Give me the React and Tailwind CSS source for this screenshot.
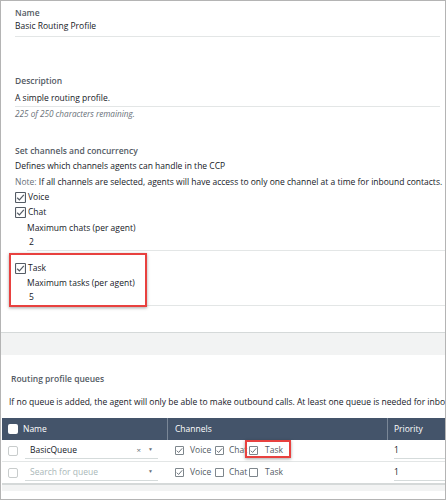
import React from "react";

const F = { fontFamily: "'Open Sans', Lato, Arial, sans-serif" };

function Check({ checked, size = 10, color = "#545b64" }) {
  return (
    <svg width={size} height={size} viewBox="0 0 10 10" className="shrink-0">
      <rect x="0.5" y="0.5" width="9" height="9" fill="white" stroke={color} strokeWidth="1" rx="0.5" />
      {checked && <path d="M2 5.2 L4 7.2 L8 2.6" fill="none" stroke={color} strokeWidth="1.1" />}
    </svg>
  );
}

function FormCheck({ label }) {
  return (
    <div className="flex items-center gap-[2px] h-[15px] text-[8.5px] text-[#16191f]">
      <Check checked size={11} color="#545b64" />
      <span>{label}</span>
    </div>
  );
}

function ChanCheck({ checked, label, w, gap }) {
  return (
    <div className={`flex items-center ${w}`}>
      <Check checked={checked} size={9} color="#687078" />
      <span className={`${gap} text-[8.5px] text-[#545b64]`}>{label}</span>
    </div>
  );
}

export default function App() {
  return (
    <div style={F} className="w-[446px] h-[500px] border border-[#b4b4b4] bg-white overflow-hidden flex flex-col">
      {/* top form */}
      <div className="h-[331px] pl-[14px] flex flex-col">
        <div className="pt-[5px] text-[8.5px] font-semibold text-[#545b64] h-[20px] leading-[14px]">Name</div>
        <div className="text-[8.5px] text-[#16191f] h-[10px] leading-[10px]">Basic Routing Profile</div>
        <div className="mt-[5px] w-[425px] border-b border-[#e3e6e6]"></div>
        <div className="mt-[38px] text-[8.5px] font-semibold text-[#545b64] leading-[12px]">Description</div>
        <div className="mt-[5px] text-[8.5px] text-[#16191f] leading-[12px]">A simple routing profile.</div>
        <div className="mt-[2px] w-[425px] border-b border-[#e3e6e6]"></div>
        <div className="mt-[1px] text-[8.2px] italic text-[#687078] leading-[12px]">225 of 250 characters remaining.</div>
        <div className="mt-[25px] text-[8.5px] font-semibold text-[#545b64] leading-[12px]">Set channels and concurrency</div>
        <div className="mt-[3px] text-[8.5px] text-[#16191f] leading-[12px]">Defines which channels agents can handle in the CCP</div>
        <div className="mt-[4px] text-[8.5px] text-[#16191f] leading-[12px] whitespace-nowrap">
          <span className="text-[#687078]">Note:</span> If all channels are selected, agents will have access to only one channel at a time for inbound contacts.
        </div>
        <div className="mt-[2px] flex flex-col">
          <FormCheck label="Voice" />
          <FormCheck label="Chat" />
        </div>
        <div className="pl-[12px] flex flex-col">
          <div className="mt-[2px] text-[8.5px] text-[#16191f] leading-[12px]">Maximum chats (per agent)</div>
          <div className="mt-[2px] pl-[2px] text-[8.5px] text-[#16191f] leading-[12px]">2</div>
          <div className="mt-[2px] border-b border-[#e3e6e6]"></div>
        </div>
        <div className="relative mt-[10px] flex flex-col">
          <FormCheck label="Task" />
          <div className="pl-[12px] flex flex-col">
            <div className="mt-[1px] text-[8.5px] text-[#16191f] leading-[12px]">Maximum tasks (per agent)</div>
            <div className="mt-[2px] pl-[2px] text-[8.5px] text-[#16191f] leading-[12px]">5</div>
            <div className="mt-[2px] border-b border-[#e3e6e6]"></div>
          </div>
          <div className="absolute left-[-6px] top-[-8px] w-[138px] h-[54px] border-2 border-[#e8413f] shadow-[0_1px_3px_rgba(0,0,0,0.35)]"></div>
        </div>
      </div>
      <div className="border-t border-[#d5d9d9] h-[23px] bg-[#f2f3f3]"></div>
      {/* queues */}
      <div className="flex-1 flex flex-col">
        <div className="pl-[10px] mt-[18px] text-[8.5px] font-semibold text-[#545b64] leading-[12px]">Routing profile queues</div>
        <div className="pl-[8px] mt-[11px] text-[8.5px] text-[#16191f] leading-[12px] whitespace-nowrap">
          If no queue is added, the agent will only be able to make outbound calls. At least one queue is needed for inbound contacts.
        </div>
        <div className="mt-[10px] ml-[1px] flex flex-col">
          {/* header */}
          <div className="h-[22px] bg-[#44546a] flex text-white text-[8.5px]">
            <div className="w-[166px] flex items-center pl-[6px] border-r border-[#7a8797]">
              <div className="w-[10px] h-[10px] bg-white rounded-[2px]"></div>
              <span className="ml-[5px]">Name</span>
            </div>
            <div className="w-[220px] flex items-center pl-[7px] border-r border-[#7a8797]">Channels</div>
            <div className="flex-1 flex items-center pl-[6px]">Priority</div>
          </div>
          {/* row 1 */}
          <div className="h-[22px] flex border-b border-[#e3e6e6]">
            <div className="w-[166px] flex items-center pl-[6px]">
              <div className="w-[10px] h-[10px] border border-[#c8cccc] rounded-[2px]"></div>
              <div className="ml-[7px] w-[133px] h-[17px] border-b border-[#d5dbdb] flex items-center pl-[5px] pr-[5px] text-[8.5px] text-[#16191f]">
                <span className="flex-1">BasicQueue</span>
                <span className="text-[8px] text-[#687078] mr-[7px]">×</span>
                <span className="text-[5px] text-[#687078]">▼</span>
              </div>
            </div>
            <div className="w-[220px] flex items-center pl-[7px]">
              <ChanCheck checked label="Voice" w="w-[40px]" gap="ml-[6px]" />
              <ChanCheck checked label="Chat" w="w-[34px]" gap="ml-[5px]" />
              <div className="relative flex items-center">
                <ChanCheck checked label="Task" w="w-[40px]" gap="ml-[7px]" />
                <div className="absolute left-[-4px] top-[-4px] w-[46px] h-[18px] border-2 border-[#e8413f] shadow-[0_1px_3px_rgba(0,0,0,0.35)]"></div>
              </div>
            </div>
            <div className="flex-1 flex items-center pl-[6px]">
              <div className="w-full h-[17px] border-b border-[#d5dbdb] flex items-center text-[8.5px] text-[#16191f]">1</div>
            </div>
          </div>
          {/* row 2 */}
          <div className="h-[23px] flex border-b-2 border-[#d5d9d9]">
            <div className="w-[166px] flex items-center pl-[6px]">
              <div className="w-[10px] h-[10px] border border-[#c8cccc] rounded-[2px]"></div>
              <div className="ml-[7px] w-[133px] h-[17px] border-b border-[#d5dbdb] flex items-center pl-[5px] pr-[5px] text-[8.5px] text-[#aab7b8]">
                <span className="flex-1">Search for queue</span>
                <span className="text-[5px] text-[#687078]">▼</span>
              </div>
            </div>
            <div className="w-[220px] flex items-center pl-[7px]">
              <ChanCheck checked label="Voice" w="w-[40px]" gap="ml-[6px]" />
              <ChanCheck checked={false} label="Chat" w="w-[34px]" gap="ml-[5px]" />
              <ChanCheck checked={false} label="Task" w="w-[40px]" gap="ml-[7px]" />
            </div>
            <div className="flex-1 flex items-center pl-[6px]">
              <div className="w-full h-[17px] border-b border-[#d5dbdb] flex items-center text-[8.5px] text-[#16191f]">1</div>
            </div>
          </div>
          <div className="h-[6px] bg-[#f2f3f3]"></div>
        </div>
      </div>
    </div>
  );
}
